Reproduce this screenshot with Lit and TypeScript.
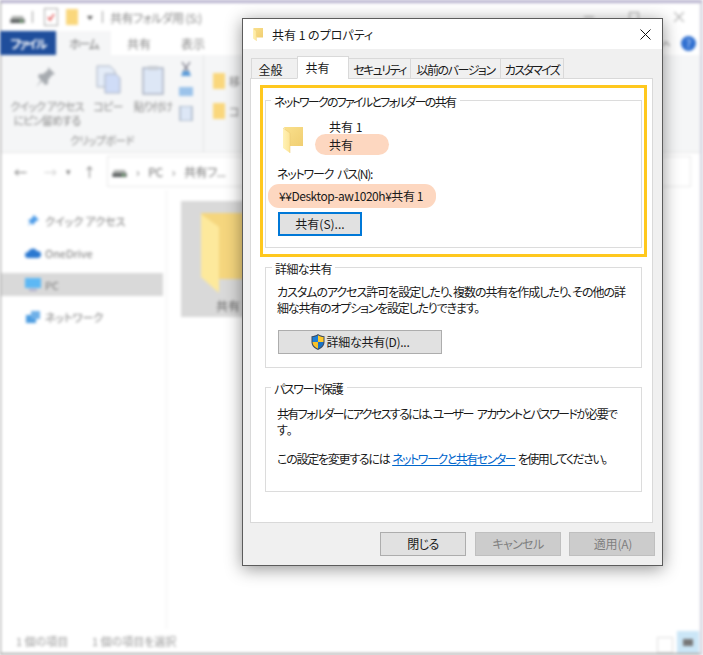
import { LitElement, html, css, svg } from "lit";
import { customElement } from "lit/decorators.js";

const folderIcon = (id: string) => html`<svg class="folder-svg" viewBox="0 0 20 26">
  <defs>
    <linearGradient id="${id}a" x1="0" y1="0" x2="1" y2="0"><stop offset="0" stop-color="#fff2b8"/><stop offset="1" stop-color="#fde596"/></linearGradient>
    <linearGradient id="${id}b" x1="0" y1="0" x2="1" y2="1"><stop offset="0" stop-color="#fae08c"/><stop offset="1" stop-color="#f0ce72"/></linearGradient>
  </defs>
  <path d="M1 0h19v19H7z" fill="url(#${id}b)"/>
  <path d="M0 1l7 5v20l-7-5z" fill="url(#${id}a)"/>
  <path d="M0 1l7 5v20" fill="none" stroke="#e8c670" stroke-width=".5"/>
</svg>`;

const shield = html`<svg class="shield" viewBox="0 0 14 16">
  <path d="M7 0C5 1.400 3 2 .5 2.200V8c0 3.600 2.600 6.400 6.500 8 3.900-1.600 6.500-4.400 6.500-8V2.200C11 2 9 1.400 7 0z" fill="#3a4a63"/>
  <path d="M7 1.200C5.400 2.300 3.500 2.900 1.500 3.100V8H7z" fill="#1d7fd6"/>
  <path d="M7 1.200C8.600 2.300 10.500 2.900 12.500 3.100V8H7z" fill="#fdc92b"/>
  <path d="M1.500 8H7v6.800C3.700 13.400 1.500 11 1.500 8z" fill="#f8c22a"/>
  <path d="M12.500 8H7v6.800c3.300-1.400 5.500-3.800 5.500-6.800z" fill="#1a72c4"/>
</svg>`;

const drive = html`<svg class="i-drive" viewBox="0 0 16 8"><path d="M2 0h12l2 4v4H0V4z" fill="#aeb0ae"/><rect y="4" width="16" height="4" fill="#55595a"/><rect x="11" y="5" width="3" height="2" fill="#7fd07f"/></svg>`;

@customElement("app-root")
export class AppRoot extends LitElement {
  static styles = css`
    :host { display: block; width: 703px; height: 655px; position: relative; overflow: hidden; background: #fff;
      font-family: "Noto Sans CJK JP", "Noto Sans", sans-serif; font-feature-settings: "palt"; font-size: 12px; color: #1a1a1a; }
    svg { display: block; flex: none; }

    /* blurred explorer */
    .explorer { width: 703px; height: 655px; box-sizing: border-box; display: flex; flex-direction: column; background: #fff;
      border-top: 3px solid #b4aecb; border-left: 1px solid #8e8e8e; border-right: 3px solid #d5d5e0; filter: blur(1.4px); color: #666; }
    .qat { height: 28px; flex: none; display: flex; align-items: center; padding-left: 9px; box-sizing: border-box; }
    .i-drive { width: 15px; height: 7px; margin-top: 4px; }
    .qsep { width: 1px; height: 12px; background: #999; margin: 0 11px 0 7px; }
    .qsep.b { margin: 0 7px 0 9px; height: 12px; }
    .doc { width: 12px; height: 16px; border: 1px solid #aaa; background: #fff; margin-right: 8px; position: relative; }
    .doc svg { width: 10px; height: 10px; margin: 3px 1px; }
    .qfolder { width: 12px; height: 16px; background: #fad77c; margin-right: 9px; }
    .caret { width: 0; height: 0; border: 3px solid transparent; border-top: 4px solid #555; margin-top: 5px; }
    .title { color: #888; font-size: 12px; letter-spacing: -0.6px; }
    .winbtns { margin-left: auto; margin-right: 16px; display: flex; gap: 35px; }
    .winbtns svg { width: 10px; height: 10px; }
    .tabsx { height: 24px; flex: none; display: flex; align-items: stretch; position: relative; }
    .fileTab { width: 56px; background: #1f4e9c; color: #fff; font-weight: 700; display: flex; align-items: center; justify-content: center; margin-left: -1px; letter-spacing: -2px; }
    .homeTab { width: 55px; background: #f5f6f7; display: flex; align-items: center; justify-content: center; color: #777; letter-spacing: -2px; }
    .plainTab { display: flex; align-items: center; color: #888; }
    .plainTab.a { margin-left: 16px; }
    .plainTab.b { margin-left: 30px; }
    .chev { margin-left: auto; align-self: center; width: 8px; height: 5px; }
    .help { margin: 0 4px 0 11px; align-self: center; width: 15px; height: 15px; border-radius: 50%; background: #2f6fd0; color: #cfe0ff; font-size: 11px; line-height: 15px; text-align: center; }
    .ribbon { height: 98px; flex: none; box-sizing: border-box; background: #f5f6f7; border-bottom: 1px solid #e6e6e6; display: flex; color: #888; font-size: 11px; }
    .clip { width: 203px; flex: none; border-right: 1px solid #e2e3e4; display: flex; flex-direction: column; box-sizing: border-box; }
    .clipTop { display: flex; height: 76px; flex: none; }
    .rbtn { display: flex; flex-direction: column; align-items: center; text-align: center; line-height: 14px; padding-top: 10px; box-sizing: border-box; white-space: nowrap; letter-spacing: -0.8px; }
    .rbtn svg { height: 30px; margin-bottom: 4px; }
    .rbtn.pin { width: 78px; margin-left: 7px; }
    .rbtn.copy { width: 38px; margin-left: 3px; }
    .rbtn.paste { width: 52px; margin-left: 0; }
    .rsmall { display: flex; flex-direction: column; gap: 7px; padding-top: 7px; margin-left: 0; }
    .rsmall svg { width: 14px; height: 15px; }
    .clipLabel { text-align: center; color: #888; margin-top: 1px; letter-spacing: -0.6px; }
    .org { display: flex; flex-direction: column; gap: 14px; padding: 18px 0 0 9px; }
    .org div { display: flex; gap: 4px; align-items: center; }
    .org i { display: block; width: 12px; height: 16px; background: #fad77c; }
    .addr { height: 37px; flex: none; display: flex; align-items: center; color: #777; box-sizing: border-box; }
    .nav { display: flex; align-items: center; width: 106px; flex: none; font-size: 13px; }
    .nav span:nth-child(1) { margin-left: 13px; width: 30px; }
    .nav span:nth-child(2) { width: 22px; color: #ccc; }
    .nav span:nth-child(3) { width: 17px; font-size: 9px; }
    .addrBox { flex: 1; height: 29px; margin-right: 9px; border: 1px solid #e8e8e8; display: flex; align-items: center; gap: 9px; padding-left: 4px; letter-spacing: -0.4px; }
    .main { flex: 1; display: flex; min-height: 0; }
    .tree { width: 166px; flex: none; display: flex; flex-direction: column; padding-top: 19px; box-sizing: border-box; border-right: 1px solid #f0f0f0; }
    .tree div { height: 23px; display: flex; align-items: center; gap: 4px; padding-left: 25px; margin-bottom: 9px; width: 162px; box-sizing: border-box; color: #777; font-size: 11px; }
    .tree div:nth-child(3) { background: #d9d9d9; }
    .tree svg { width: 16px; height: 14px; margin-left: -1px; }
    .items { flex: 1; padding: 11px 0 0 14px; }
    .sel { width: 94px; height: 116px; background: #d9d9d9; display: flex; flex-direction: column; align-items: center; padding-top: 12px; box-sizing: border-box; }
    .sel .bigf { width: 60px; height: 80px; flex: none; margin-left: 6px; }
    .sel span { margin-top: 4px; }
    .status { height: 24px; flex: none; display: flex; align-items: center; color: #999; font-size: 11px; border-bottom: 2px solid #aaa; }
    .status .s1 { margin-left: 15px; width: 76px; }
    .status .views { margin-left: auto; display: flex; align-items: flex-end; height: 100%; }
    .gridv { width: 14px; height: 14px; margin-right: 4px; border: 1px solid #ddd; }
    .active { width: 22px; height: 22px; background: #cbe6f7; margin-right: 1px; display: flex; align-items: center; justify-content: center; }
    .active i { display: block; width: 10px; height: 7px; background: #777; }

    /* dialog */
    .dialog { position: absolute; left: 242px; top: 18px; width: 421px; height: 548px; box-sizing: border-box; background: #f0f0f0;
      border: 1px solid #5c5c5c; box-shadow: 0 3px 16px rgba(0, 0, 0, 0.42); display: flex; flex-direction: column; color: #1a1a1a; }
    .titlebar { height: 30px; flex: none; background: #fff; display: flex; align-items: center; padding-left: 10px; padding-right: 11px; }
    .titlebar .folder-svg { width: 10px; height: 13px; margin-right: 9px; }
    .titlebar .x { margin-left: auto; width: 11px; height: 11px; }
    .tabs { display: flex; align-items: flex-end; height: 30px; flex: none; padding: 0 0 0 9px; position: relative; z-index: 1; margin-bottom: -1px; }
    .tab { height: 21px; box-sizing: border-box; border: 1px solid #d9d9d9; border-bottom: 1px solid #d9d9d9; margin-left: -1px; background: #f0f0f0;
      display: flex; align-items: center; justify-content: center; white-space: nowrap; padding-top: 1px; }
    .tab.on { height: 23px; background: #fff; border-bottom-color: #fff; padding-top: 0; padding-right: 11px; }
    .t1 { width: 47px; padding-right: 8px; } .t2 { width: 52px; } .t3 { width: 63px; letter-spacing: -1.6px; } .t4 { width: 91px; letter-spacing: -1.45px; } .t5 { width: 64px; letter-spacing: -1.7px; }
    .panel { margin: 0 9px 0 7px; height: 445px; flex: none; box-sizing: border-box; background: #fff; border: 1px solid #d9d9d9; display: flex; flex-direction: column; }
    .hl { margin: 6px 0 0 9px; width: 387px; height: 172px; flex: none; box-sizing: border-box; border: 3px solid #ffc81e; padding: 12px 0 0 2px; }
    .group { position: relative; box-sizing: border-box; border: 1px solid #dcdcdc; width: 377px; }
    .legend { position: absolute; left: 6px; top: -7px; background: #fff; padding: 0 3px; line-height: 16px; white-space: nowrap; }
    .lg1 { letter-spacing: -1.75px; left: 5px; padding-right: 5px; }
    .lg2 { letter-spacing: -0.6px; }
    .lg3 { letter-spacing: -1.4px; left: 5px; padding-right: 5px; }
    .g1 { height: 148px; padding: 19px 0 0 11px; }
    .g2 { height: 101px; margin: 10px 0 0 14px; padding: 16px 0 0 11px; }
    .g3 { height: 105px; margin: 19px 0 0 14px; padding: 18px 0 0 11px; }
    .line { line-height: 16px; white-space: nowrap; }
    .ls1 { letter-spacing: -1.05px; }
    .ls2 { letter-spacing: -1.2px; }
    .ls3 { letter-spacing: -1.65px; word-spacing: 3px; }
    .ls4 { letter-spacing: -1.25px; }
    .ls5 { letter-spacing: -1.5px; }
    .ident { display: flex; height: 35px; }
    .ident .folder-svg { width: 20px; height: 26px; margin: 7px 0 0 6px; }
    .names { margin-left: 26px; display: flex; flex-direction: column; }
    .names .line:first-child { line-height: 14px; }
    .pill { background: #fdd7c0; border-radius: 11px; box-sizing: border-box; white-space: nowrap; }
    .pill.p1 { width: 74px; height: 21px; line-height: 22px; margin-left: -14px; padding-left: 14px; }
    .netlabel { margin-top: 11px; letter-spacing: -1.2px; word-spacing: 2.500px; }
    .pill.p2 { width: 168px; height: 24px; line-height: 24px; margin: 2px 0 0 -9px; padding-left: 11px; letter-spacing: -0.45px; }
    .btn { box-sizing: border-box; height: 24px; display: flex; align-items: center; justify-content: center; background: #e1e1e1; border: 1px solid #adadad; white-space: nowrap; padding-bottom: 1px; }
    .btn.share { width: 84px; border: 2px solid #0078d7; margin: 4px 0 0 1px; }
    .btn.adv { width: 164px; margin: 14px 0 0 1px; gap: 2px; letter-spacing: -0.3px; }
    .shield { width: 14px; height: 16px; }
    .spacer { height: 13px; }
    a { color: #0066cc; text-decoration: underline; }
    .footer { display: flex; justify-content: flex-end; gap: 9px; padding: 9px 7px 0 0; }
    .footer .btn { width: 86px; }
    .footer .gap8 { margin-left: -1px; padding-left: 2px; letter-spacing: -0.2px; }
    .footer .close { letter-spacing: -0.6px; }
    .footer .dis { background: #cccccc; border-color: #bfbfbf; color: #7f7f7f; }
    .footer .cancel { letter-spacing: -0.6px; }
  `;

  render() {
    const pin = svg`<path d="M14 2l7 7-3 1-4 5 0 4-3 1-3-4-6 6 5-7-3-3 1-3 4 0 5-4z" fill="#a7abb0"/>`;
    const copy = svg`<path d="M1 1h13l5 5v16H1z" fill="#e4ecf8" stroke="#a9b1c0"/><path d="M9 9h11l4 4v15H9z" fill="#cfdcf7" stroke="#a9b1c0"/>`;
    const paste = svg`<rect x="1" y="3" width="20" height="26" fill="#dde7f6" stroke="#a9b1c0" stroke-width="1.500"/><rect x="6" y="1" width="10" height="4" fill="#c7ccd4"/>`;
    return html`
      <div class="explorer">
        <div class="qat">
          ${drive}<div class="qsep"></div>
          <div class="doc"><svg viewBox="0 0 10 10"><path d="M2 5l2 3 4-6" fill="none" stroke="#d33" stroke-width="1.300"/></svg></div>
          <div class="qfolder"></div><div class="caret"></div><div class="qsep b"></div>
          <span class="title">共有フォルダ用 (S:)</span>
          <div class="winbtns">
            <svg viewBox="0 0 10 10"><path d="M0 5h10" stroke="#aaa" stroke-width="1.200"/></svg>
            <svg viewBox="0 0 10 10"><rect x=".5" y=".5" width="9" height="9" fill="none" stroke="#aaa" stroke-width="1.200"/></svg>
            <svg viewBox="0 0 10 10"><path d="M0 0l10 10M10 0L0 10" stroke="#aaa" stroke-width="1.200"/></svg>
          </div>
        </div>
        <div class="tabsx">
          <div class="fileTab">ファイル</div><div class="homeTab">ホーム</div>
          <div class="plainTab a">共有</div><div class="plainTab b">表示</div>
          <svg class="chev" viewBox="0 0 8 5"><path d="M0 5l4-4 4 4" fill="none" stroke="#999" stroke-width="1.200"/></svg>
          <div class="help">?</div>
        </div>
        <div class="ribbon">
          <div class="clip">
            <div class="clipTop">
              <div class="rbtn pin"><svg width="26" viewBox="0 0 26 30">${pin}</svg><span>クイック アクセス</span><span>にピン留めする</span></div>
              <div class="rbtn copy"><svg width="25" viewBox="0 0 25 30">${copy}</svg>コピー</div>
              <div class="rbtn paste"><svg width="22" viewBox="0 0 22 30">${paste}</svg>貼り付け</div>
              <div class="rsmall">
                <svg viewBox="0 0 14 15"><path d="M3 0l7 10M11 0L4 10" stroke="#667" stroke-width="1.200" fill="none"/><path d="M2 14l2-5h6l2 5z" fill="#5b9bd8"/></svg>
                <svg viewBox="0 0 14 15"><rect y="3" width="14" height="9" fill="#9cc3ea"/></svg>
                <svg viewBox="0 0 14 15"><rect x="1" width="12" height="15" fill="#dde7f6" stroke="#8a99ad"/></svg>
              </div>
            </div>
            <div class="clipLabel">クリップボード</div>
          </div>
          <div class="org"><div><i></i>移</div><div><i></i>コ</div></div>
        </div>
        <div class="addr">
          <div class="nav"><span>←</span><span>→</span><span>▾</span><span>↑</span></div>
          <div class="addrBox">${drive}<span>›</span><span>PC</span><span>›</span><span>共有フ...</span></div>
        </div>
        <div class="main">
          <div class="tree">
            <div><svg viewBox="0 0 16 14"><path d="M9 1l5 5-3 1-3 4-2-2-3 3 2-4-2-2 3-1z" fill="#4c9be8"/></svg>クイック アクセス</div>
            <div><svg viewBox="0 0 16 14"><path d="M3 12a3 3 0 010-6 5 5 0 019-1 3.500 3.500 0 011 7z" fill="#2a78d0"/></svg>OneDrive</div>
            <div><svg viewBox="0 0 16 14"><rect width="16" height="10" fill="#5cb8f5"/><rect x="4" y="11" width="8" height="2" fill="#aac"/></svg>PC</div>
            <div><svg viewBox="0 0 16 14"><rect x="1" y="5" width="10" height="8" fill="#4a9be0"/><rect x="6" y="1" width="9" height="8" fill="#6fb0e8"/></svg>ネットワーク</div>
          </div>
          <div class="items">
            <div class="sel"><svg class="bigf" viewBox="0 0 60 80"><path d="M0 0h60v66H18z" fill="#f5d67e"/><path d="M0 1l18 13v66L0 64z" fill="#fde99c"/></svg><span>共有</span></div>
          </div>
        </div>
        <div class="status">
          <span class="s1">1 個の項目</span><span>1 個の項目を選択</span>
          <div class="views"><div class="gridv"></div><div class="active"><i></i></div></div>
        </div>
      </div>

      <div class="dialog">
        <div class="titlebar">
          ${folderIcon("t")}
          <span>共有 1 のプロパティ</span>
          <svg class="x" viewBox="0 0 11 11"><path d="M.5.500l10 10M10.500.500l-10 10" stroke="#111" stroke-width="1" fill="none"/></svg>
        </div>
        <div class="tabs">
          <div class="tab t1">全般</div><div class="tab on t2">共有</div><div class="tab t3">セキュリティ</div><div class="tab t4">以前のバージョン</div><div class="tab t5">カスタマイズ</div>
        </div>
        <div class="panel">
          <div class="hl">
            <div class="group g1">
              <div class="legend lg1">ネットワークのファイルとフォルダーの共有</div>
              <div class="ident">
                ${folderIcon("m")}
                <div class="names">
                  <div class="line">共有 1</div>
                  <div class="pill p1">共有</div>
                </div>
              </div>
              <div class="line netlabel">ネットワーク パス(N):</div>
              <div class="pill p2">¥¥Desktop-aw1020h¥共有 1</div>
              <div class="btn share">共有(S)...</div>
            </div>
          </div>
          <div class="group g2">
            <div class="legend lg2">詳細な共有</div>
            <div class="line ls1">カスタムのアクセス許可を設定したり、複数の共有を作成したり、その他の詳</div>
            <div class="line ls2">細な共有のオプションを設定したりできます。</div>
            <div class="btn adv">${shield}<span>詳細な共有(D)...</span></div>
          </div>
          <div class="group g3">
            <div class="legend lg3">パスワード保護</div>
            <div class="line ls3">共有フォルダーにアクセスするには、ユーザー アカウントとパスワードが必要で</div>
            <div class="line">す。</div>
            <div class="spacer"></div>
            <div class="line"><span class="ls4">この設定を変更するには</span> <a class="ls5">ネットワークと共有センター</a> <span class="ls5">を使用してください。</span></div>
          </div>
        </div>
        <div class="footer">
          <div class="btn close">閉じる</div><div class="btn dis cancel">キャンセル</div><div class="btn dis gap8">適用(A)</div>
        </div>
      </div>
    `;
  }
}
